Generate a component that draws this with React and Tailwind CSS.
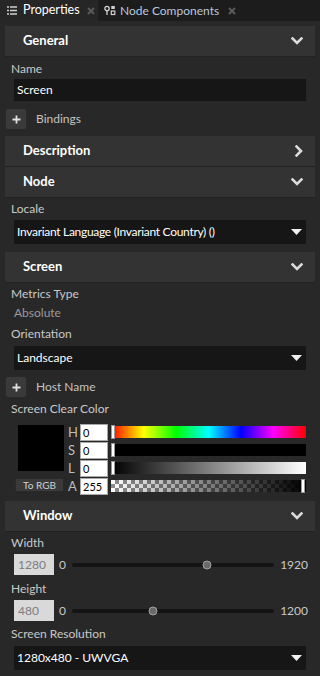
import React from "react";

const font = { fontFamily: 'Lato, "Noto Sans", sans-serif' };

function ChevronDown() {
  return (
    <svg width="12" height="8" viewBox="0 0 12 8">
      <path d="M1.5 1.5 L6 6 L10.5 1.5" stroke="#dcdcdc" strokeWidth="2.6" fill="none" strokeLinecap="square" />
    </svg>
  );
}
function ChevronRight() {
  return (
    <svg width="8" height="12" viewBox="0 0 8 12">
      <path d="M1.5 1.5 L6 6 L1.5 10.5" stroke="#dcdcdc" strokeWidth="2.6" fill="none" strokeLinecap="square" />
    </svg>
  );
}
function Triangle() {
  return (
    <svg width="11" height="7" viewBox="0 0 11 7">
      <path d="M0 0 H11 L5.5 6 Z" fill="#f0f0f0" />
    </svg>
  );
}
function CloseX() {
  return (
    <svg width="8" height="8" viewBox="0 0 8 8">
      <path d="M1 1 L7 7 M7 1 L1 7" stroke="#5a5a5a" strokeWidth="2" />
    </svg>
  );
}

function Header({ title, open = true }) {
  return (
    <div className="mx-[5px] h-[31px] bg-[#333333] border-b border-[#222222] flex items-center justify-between pl-[18px] pr-[12px]">
      <span className="text-[13px] font-bold text-white">{title}</span>
      {open ? <ChevronDown /> : <ChevronRight />}
    </div>
  );
}

function Label({ children, className = "" }) {
  return <div className={"pl-[11px] text-[12px] leading-[16px] text-[#c8c8c8] " + className}>{children}</div>;
}

function Select({ value, className = "", textClass = "" }) {
  return (
    <div className={"mx-[14px] h-[24px] bg-[#161616] flex items-center justify-between pl-[3px] pr-[4px] " + className}>
      <span className={"text-[12px] text-white " + textClass}>{value}</span>
      <Triangle />
    </div>
  );
}

function PlusRow({ label, className = "" }) {
  return (
    <div className={"flex items-center pl-[6px] h-[20px] " + className}>
      <div className="w-[20px] h-[20px] rounded-[2px] bg-[#3a3a3a] flex items-center justify-center">
        <svg width="9" height="9" viewBox="0 0 9 9">
          <path d="M4.5 0.5 V8.5 M0.5 4.5 H8.5" stroke="#e0e0e0" strokeWidth="1.8" />
        </svg>
      </div>
      <span className="ml-[10px] text-[12px] text-[#c4c4c4]">{label}</span>
    </div>
  );
}

function ColorRow({ letter, value, bar, handleRight = false }) {
  return (
    <div className="flex items-center h-[18px]">
      <span className="w-[12px] text-[13px] text-[#bdbdbd] leading-none">{letter}</span>
      <div className="w-[28px] h-[17px] bg-white border border-[#a8a8a8] flex items-center pl-[2px] text-[11px] text-black leading-none">
        {value}
      </div>
      <div className={"relative ml-[3px] w-[195px] h-[12px] " + bar}>
        <div className={"absolute top-[-1px] h-[14px] w-[4px] bg-white border border-[#999] " + (handleRight ? "right-[1px]" : "left-0")} />
      </div>
    </div>
  );
}

function SliderRow({ value, max, pct }) {
  return (
    <div className="flex items-center pl-[14px] pr-[12px] h-[21px]">
      <div className="w-[40px] h-[21px] bg-[#d9d9d9] flex items-center pl-[4px] text-[12px] text-[#7d7d7d]">{value}</div>
      <span className="ml-[5px] text-[12px] text-[#c8c8c8]">0</span>
      <div className="relative flex-1 mx-[6px] h-[4px] rounded-full bg-[#141414]">
        <div
          className="absolute top-1/2 -translate-y-1/2 -translate-x-1/2 w-[9px] h-[9px] rounded-full bg-[#6a6a6a] border border-[#a0a0a0]"
          style={{ left: pct + "%" }}
        />
      </div>
      <span className="text-[12px] text-[#c8c8c8]">{max}</span>
    </div>
  );
}

export default function App() {
  return (
    <div className="w-[320px] h-[676px] bg-[#282828] overflow-hidden" style={font}>
      {/* Tabs */}
      <div className="h-[21px] bg-[#1c1c1c] flex">
        <div className="w-[98px] h-full bg-[#262626] flex items-center pl-[7px]">
          <svg width="10" height="9" viewBox="0 0 10 9">
            <path d="M0 1 H2 M3 1 H10 M0 4.5 H2 M3 4.5 H10 M0 8 H2 M3 8 H10" stroke="#d0d0d0" strokeWidth="1.6" />
          </svg>
          <span className="ml-[6px] text-[12.5px] text-white">Properties</span>
          <span className="ml-[7px] flex"><CloseX /></span>
        </div>
        <div className="flex items-center pl-[6px]">
          <svg width="12" height="11" viewBox="0 0 12 11">
            <circle cx="3" cy="3.5" r="2.2" stroke="#d0d0d0" strokeWidth="1.3" fill="none" />
            <path d="M3 5.7 V10" stroke="#d0d0d0" strokeWidth="1.3" />
            <rect x="7.3" y="1" width="3.5" height="3" fill="#d0d0d0" />
            <rect x="7.3" y="6" width="3.5" height="3.5" stroke="#d0d0d0" strokeWidth="1.2" fill="none" />
          </svg>
          <span className="ml-[4px] text-[12px] text-[#b8c8dc]">Node Components</span>
          <span className="ml-[9px] flex"><CloseX /></span>
        </div>
      </div>

      <div className="h-[5px]" />
      <Header title="General" />
      <Label className="mt-[4px]">Name</Label>
      <div className="mx-[14px] mt-[2px] h-[22px] bg-[#161616] flex items-center pl-[3px] text-[12px] text-white">Screen</div>
      <PlusRow label="Bindings" className="mt-[8px]" />
      <div className="h-[7px]" />
      <Header title="Description" open={false} />
      <Header title="Node" />
      <Label className="mt-[3px]">Locale</Label>
      <Select value="Invariant Language (Invariant Country) ()" className="mt-[3px]" textClass="tracking-[-0.3px]" />
      <div className="h-[8px]" />
      <Header title="Screen" />
      <Label className="mt-[3px]">Metrics Type</Label>
      <div className="pl-[14px] mt-[3px] text-[12px] leading-[16px] text-[#9a9a9a]">Absolute</div>
      <Label className="mt-[5px]">Orientation</Label>
      <Select value="Landscape" className="mt-[4px]" />
      <PlusRow label="Host Name" className="mt-[7px]" />
      <Label className="mt-[4px]">Screen Clear Color</Label>
      <div className="flex mt-[6px] pl-[15px]">
        <div className="flex flex-col w-[50px]">
          <div className="ml-[3px] mt-[2px] w-[46px] h-[46px] bg-black" />
          <div className="mt-[7px] w-[49px] h-[14px] rounded-[2px] bg-[#3a3a3a] border border-[#2a2a2a] flex items-center justify-center text-[10px] text-[#d0d0d0] leading-none">
            To RGB
          </div>
        </div>
        <div className="ml-[3px] flex flex-col">
          <ColorRow letter="H" value="0" bar="bg-[linear-gradient(to_right,#ff0000,#ffff00,#00ff00,#00ffff,#0000ff,#ff00ff,#ff0000)]" />
          <ColorRow letter="S" value="0" bar="bg-black" />
          <ColorRow letter="L" value="0" bar="bg-[linear-gradient(to_right,#000000,#ffffff)]" />
          <ColorRow
            letter="A"
            value="255"
            handleRight
            bar="bg-[linear-gradient(to_right,rgba(0,0,0,0),#000000),repeating-conic-gradient(#8c8c8c_0%_25%,#ffffff_0%_50%)] bg-[length:100%_100%,8px_8px]"
          />
        </div>
      </div>
      <div className="h-[6px]" />
      <Header title="Window" />
      <Label className="mt-[3px]">Width</Label>
      <div className="mt-[3px]"><SliderRow value="1280" max="1920" pct={66.7} /></div>
      <Label className="mt-[6px]">Height</Label>
      <div className="mt-[3px]"><SliderRow value="480" max="1200" pct={40} /></div>
      <Label className="mt-[5px]">Screen Resolution</Label>
      <Select value="1280x480 - UWVGA" className="mt-[4px]" />
    </div>
  );
}
